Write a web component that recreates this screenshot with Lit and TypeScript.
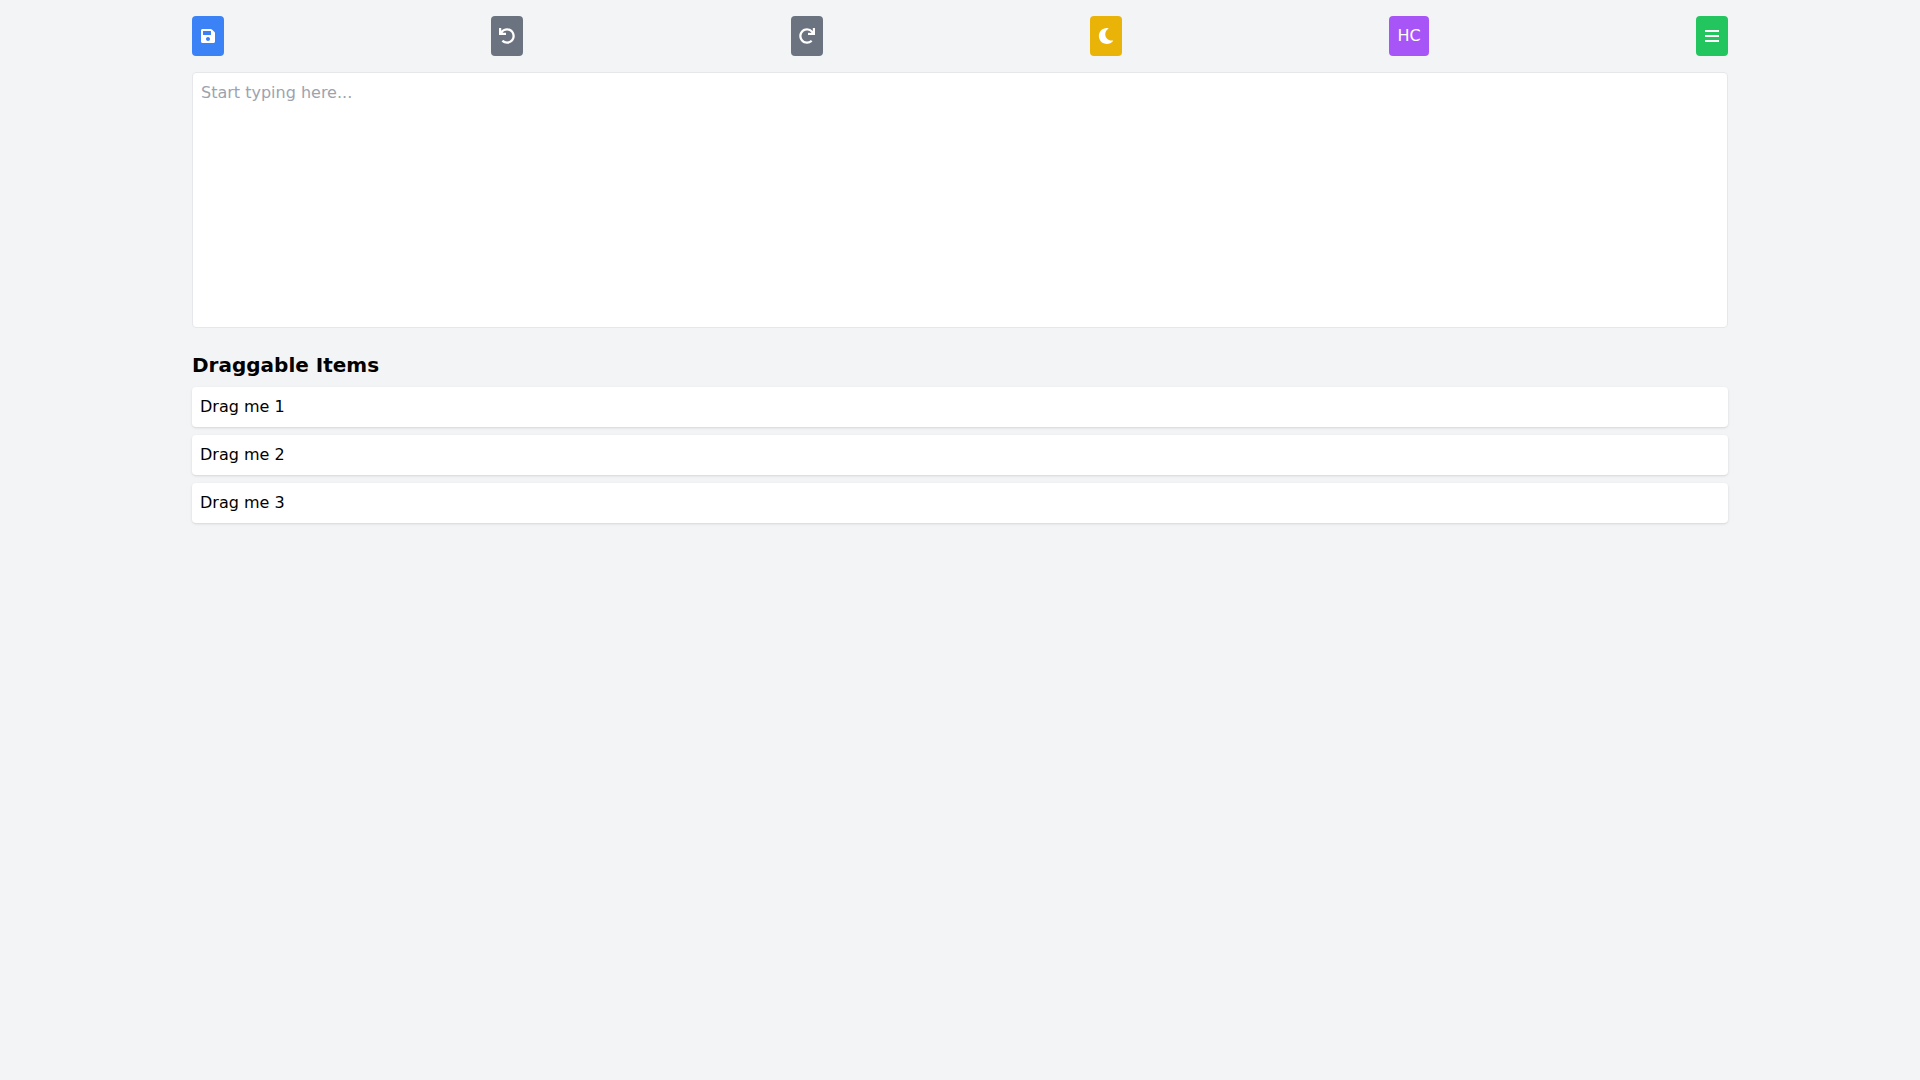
import { LitElement, html, css, svg } from "lit";
import { customElement, state } from "lit/decorators.js";

interface Icon {
  viewBox: string;
  path: string;
}

const icons: Record<string, Icon> = {
  save: {
    viewBox: "0 0 448 512",
    path: "M433.941 129.941l-83.882-83.882A48 48 0 0 0 316.118 32H48C21.49 32 0 53.49 0 80v352c0 26.51 21.49 48 48 48h352c26.51 0 48-21.49 48-48V163.882a48 48 0 0 0-14.059-33.941zM224 416c-35.346 0-64-28.654-64-64 0-35.346 28.654-64 64-64s64 28.654 64 64c0 35.346-28.654 64-64 64zm96-304.52V212c0 6.627-5.373 12-12 12H76c-6.627 0-12-5.373-12-12V108c0-6.627 5.373-12 12-12h228.52c3.183 0 6.235 1.264 8.485 3.515l3.48 3.48A11.996 11.996 0 0 1 320 111.48z",
  },
  undo: {
    viewBox: "0 0 512 512",
    path: "M212.333 224.333H12c-6.627 0-12-5.373-12-12V12C0 5.373 5.373 0 12 0h48c6.627 0 12 5.373 12 12v78.112C117.773 39.279 184.26 7.47 258.175 8.007c136.906.994 246.448 111.623 246.157 248.532C504.041 393.258 393.12 504 256.333 504c-64.089 0-122.496-24.313-166.51-64.215-5.099-4.622-5.334-12.554-.467-17.42l33.967-33.967c4.474-4.474 11.662-4.717 16.401-.525C170.76 415.336 211.58 432 256.333 432c97.268 0 176-78.716 176-176 0-97.267-78.716-176-176-176-58.496 0-110.28 28.476-142.274 72.333h98.274c6.627 0 12 5.373 12 12v48c0 6.627-5.373 12-12 12z",
  },
  redo: {
    viewBox: "0 0 512 512",
    path: "M500.33 0h-47.41a12 12 0 0 0-12 12.57l4 82.76A247.42 247.42 0 0 0 256 8C119.34 8 7.9 119.53 8 256.19 8.1 393.07 119.1 504 256 504a247.1 247.1 0 0 0 166.18-63.91 12 12 0 0 0 .48-17.43l-34-34a12 12 0 0 0-16.38-.55A176 176 0 1 1 402.1 157.8l-101.53-4.87a12 12 0 0 0-12.57 12v47.41a12 12 0 0 0 12 12h200.33a12 12 0 0 0 12-12V12a12 12 0 0 0-12-12z",
  },
  moon: {
    viewBox: "0 0 512 512",
    path: "M283.211 512c78.962 0 151.079-35.925 198.857-94.792 7.068-8.708-.639-21.43-11.562-19.35-124.203 23.654-238.262-71.576-238.262-196.954 0-72.222 38.662-138.635 101.498-174.394 9.686-5.512 7.25-20.197-3.756-22.23A258.156 258.156 0 0 0 283.211 0c-141.309 0-256 114.511-256 256 0 141.309 114.511 256 256 256z",
  },
  bars: {
    viewBox: "0 0 448 512",
    path: "M0 64h448v64H0zM0 224h448v64H0zM0 384h448v64H0z",
  },
};

const icon = (name: string) => html`
  <svg class="icon" viewBox=${icons[name].viewBox} aria-hidden="true">
    ${svg`<path d=${icons[name].path}></path>`}
  </svg>
`;

@customElement("app-root")
export class AppRoot extends LitElement {
  static styles = css`
    :host {
      display: block;
      min-height: 100vh;
      background: #f3f4f6;
      color: #000;
      font-family: "DejaVu Sans", sans-serif;
      font-size: 16px;
      line-height: 24px;
    }
    *,
    *::before,
    *::after {
      box-sizing: border-box;
    }
    .page {
      width: 80%;
      margin: 0 auto;
      padding: 16px 0;
    }
    .toolbar {
      display: flex;
      justify-content: space-between;
      margin-bottom: 16px;
    }
    .button {
      display: flex;
      align-items: center;
      justify-content: center;
      margin: 0;
      padding: 8px;
      border: 0;
      border-radius: 4px;
      color: #fff;
      font: inherit;
      cursor: pointer;
    }
    .blue {
      background: #3b82f6;
    }
    .gray {
      background: #6b7280;
    }
    .yellow {
      background: #eab308;
    }
    .purple {
      background: #a855f7;
    }
    .green {
      background: #22c55e;
    }
    .icon {
      display: block;
      width: 16px;
      height: 16px;
      fill: currentColor;
    }
    .editor {
      width: 100%;
      height: 256px;
      margin: 0;
      padding: 8px;
      border: 1px solid #e5e7eb;
      border-radius: 4px;
      background: #fff;
      color: inherit;
      font: inherit;
      resize: none;
    }
    .editor::placeholder {
      color: #9ca3af;
    }
    .title {
      margin: 16px 0 8px;
      font-size: 20px;
      line-height: 28px;
      font-weight: 700;
    }
    .list {
      display: flex;
      flex-direction: column;
      gap: 8px;
      margin: 0;
      padding: 0;
      list-style: none;
    }
    .item {
      padding: 8px;
      border-radius: 4px;
      background: #fff;
      box-shadow:
        0 1px 3px 0 rgb(0 0 0 / 0.1),
        0 1px 2px -1px rgb(0 0 0 / 0.1);
      cursor: move;
    }
  `;

  @state() private items = ["Drag me 1", "Drag me 2", "Drag me 3"];
  private dragged = -1;

  private drop(target: number) {
    if (this.dragged < 0) return;
    const next = [...this.items];
    const [moved] = next.splice(this.dragged, 1);
    next.splice(target, 0, moved);
    this.items = next;
    this.dragged = -1;
  }

  render() {
    return html`
      <main class="page">
        <div class="toolbar" role="toolbar">
          <button class="button blue" type="button" aria-label="Save">${icon("save")}</button>
          <button class="button gray" type="button" aria-label="Undo">${icon("undo")}</button>
          <button class="button gray" type="button" aria-label="Redo">${icon("redo")}</button>
          <button class="button yellow" type="button" aria-label="Dark mode">${icon("moon")}</button>
          <button class="button purple" type="button" aria-label="High contrast">HC</button>
          <button class="button green" type="button" aria-label="Menu">${icon("bars")}</button>
        </div>
        <div>
          <textarea class="editor" aria-label="Editor" placeholder="Start typing here..."></textarea>
        </div>
        <h2 class="title">Draggable Items</h2>
        <ul class="list">
          ${this.items.map(
            (item, index) => html`
              <li
                class="item"
                draggable="true"
                @dragstart=${() => (this.dragged = index)}
                @dragover=${(event: DragEvent) => event.preventDefault()}
                @drop=${() => this.drop(index)}
              >${item}</li>
            `,
          )}
        </ul>
      </main>
    `;
  }
}
